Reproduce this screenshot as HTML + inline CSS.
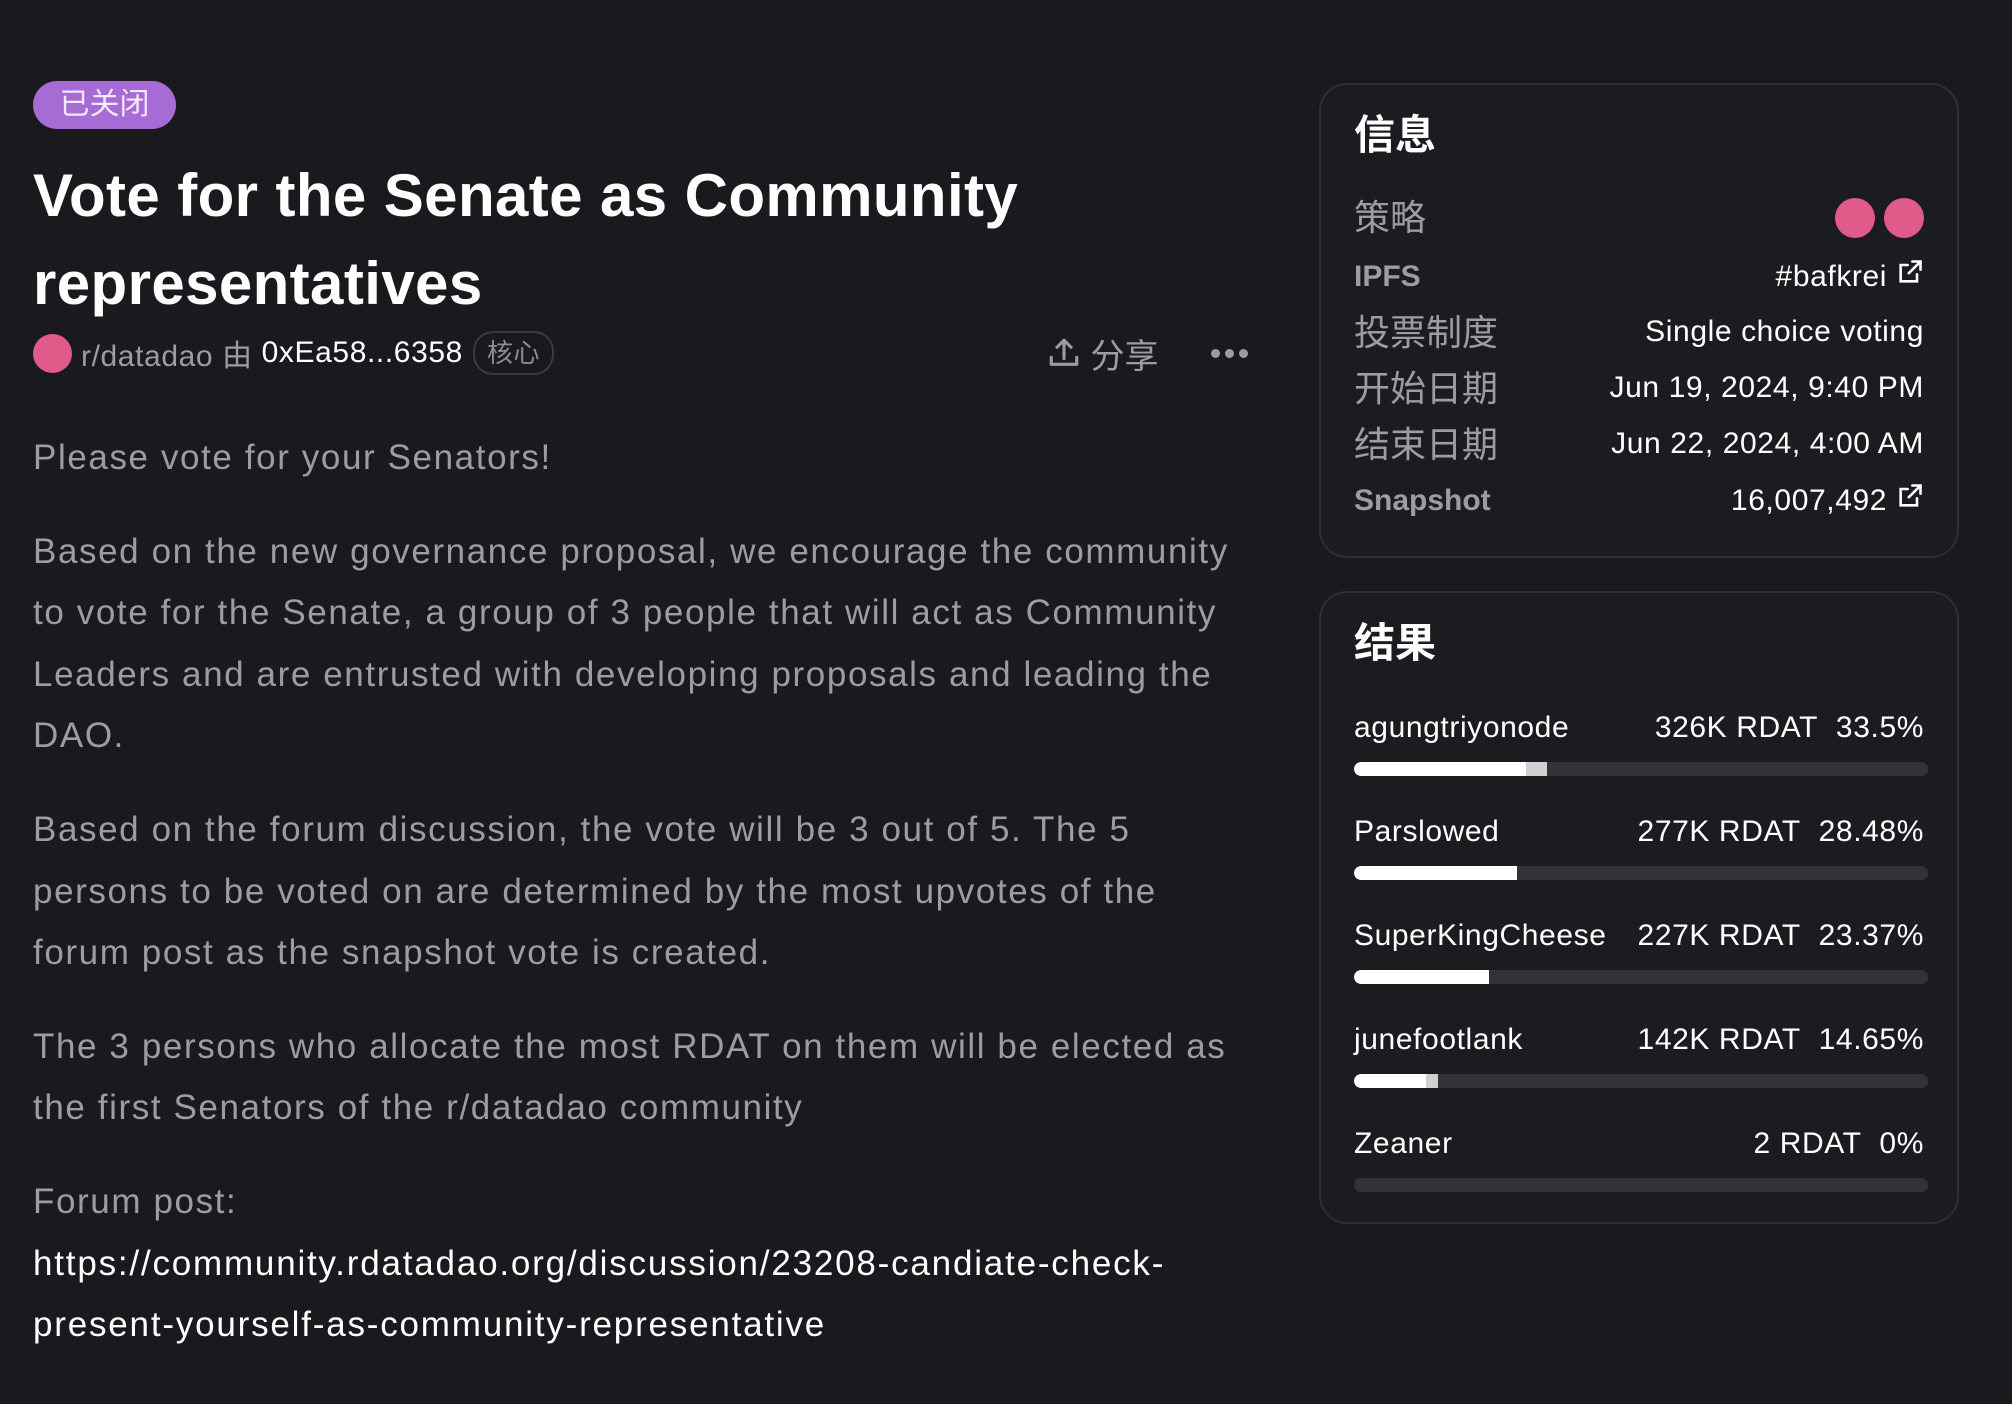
<!DOCTYPE html>
<html><head><meta charset="utf-8"><style>
*{margin:0;padding:0;box-sizing:border-box}
html,body{width:2012px;height:1404px;background:#1a1a1e;overflow:hidden}
body{font-family:"Liberation Sans","Noto Sans CJK SC",sans-serif;color:#fff;position:relative}
.abs{position:absolute;white-space:nowrap}
.badge{left:33px;top:81px;width:143px;height:48px;border-radius:24px;background:#a76bd6;color:#f3e6ff;font-size:30px;line-height:48px;text-align:center}
.title{left:33px;top:152px;font-size:60px;font-weight:bold;line-height:88px;white-space:normal;width:1150px;letter-spacing:0.4px}
.meta{left:33px;top:333px;height:40px;display:flex;align-items:center;font-size:30px;color:#9c9ca3;letter-spacing:0.6px}
.av{width:39px;height:39px;border-radius:50%;background:#e05a8a;margin-right:9px}
.core{border:2px solid #3a3a40;border-radius:20px;padding:0 12px;height:44px;line-height:40px;margin-left:10px;font-size:26px;color:#8c8c93}
.body{left:33px;top:427px;width:1215px;font-size:35px;line-height:61.6px;color:#9c9ca3;white-space:normal;letter-spacing:1.6px}
.body p{margin-bottom:32px}
.body a{color:#fff;text-decoration:none;display:block;letter-spacing:1.8px}
.card{position:absolute;left:1319px;width:640px;border:2px solid #2e2e33;border-radius:28px;background:#1c1c20}
.ct{position:absolute;left:33px;font-size:41px;font-weight:bold}
.lab{position:absolute;left:33px;color:#9c9ca3;font-size:36px}
.lab.s{font-size:30px;font-weight:bold}
.val{position:absolute;right:33px;font-size:30px;color:#fff;white-space:nowrap;letter-spacing:0.6px}
.nm{position:absolute;left:33px;font-size:30px;letter-spacing:0.6px}
.bar{position:absolute;left:33px;width:574px;height:14px;border-radius:7px;background:#333336;overflow:hidden}
.bar i{position:absolute;left:0;top:0;bottom:0;background:#fff;border-radius:7px 0 0 7px}
.bar b{position:absolute;top:0;bottom:0;background:#d0d0d0}
</style></head><body>
<div class="abs badge">已关闭</div>
<div class="abs title">Vote for the Senate as Community representatives</div>
<div class="abs meta"><div class="av"></div>r/datadao&nbsp;由&nbsp;<span style="color:#fff">0xEa58...6358</span><span class="core">核心</span></div>
<div class="abs" style="left:1047px;top:333px;height:40px;display:flex;align-items:center;font-size:34px;color:#9c9ca3">
<svg width="34" height="34" viewBox="0 0 24 24" fill="none" stroke="#9c9ca3" stroke-width="2.2" stroke-linecap="round" stroke-linejoin="round"><path d="M12 16V3M7 8l5-5 5 5M3 15v5h18v-5"/></svg>&nbsp;分享</div>
<div class="abs" style="left:1211px;top:349px;display:flex;gap:5px"><span style="width:9px;height:9px;border-radius:50%;background:#9c9ca3"></span><span style="width:9px;height:9px;border-radius:50%;background:#9c9ca3"></span><span style="width:9px;height:9px;border-radius:50%;background:#9c9ca3"></span></div>
<div class="abs body">
<p>Please vote for your Senators!</p>
<p>Based on the new governance proposal, we encourage the community to vote for the Senate, a group of 3 people that will act as Community Leaders and are entrusted with developing proposals and leading the DAO.</p>
<p>Based on the forum discussion, the vote will be 3 out of 5. The 5 persons to be voted on are determined by the most upvotes of the forum post as the snapshot vote is created.</p>
<p>The 3 persons who allocate the most RDAT on them will be elected as the first Senators of the r/datadao community</p>
<p>Forum post: <a>https://community.rdatadao.org/discussion/23208-candiate-check-present-yourself-as-community-representative</a></p>
</div>

<div class="card" style="top:83px;height:475px">
<div class="ct" style="top:16px">信息</div>
<div class="lab" style="top:104px">策略</div>
<div class="abs" style="right:33px;top:113px;display:flex;gap:9px"><span style="width:40px;height:40px;border-radius:50%;background:#e05a8a"></span><span style="width:40px;height:40px;border-radius:50%;background:#e05a8a"></span></div>
<div class="lab s" style="top:175px">IPFS</div>
<div class="val" style="top:173px">#bafkrei <svg width="28" height="28" viewBox="0 0 24 24" fill="none" stroke="#fff" stroke-width="2.2" stroke-linecap="round"><path d="M14 3h7v7M21 3l-10 10M18 14v6H4V6h6"/></svg></div>
<div class="lab" style="top:219px">投票制度</div>
<div class="val" style="top:230px">Single choice voting</div>
<div class="lab" style="top:275px">开始日期</div>
<div class="val" style="top:286px">Jun 19, 2024, 9:40 PM</div>
<div class="lab" style="top:331px">结束日期</div>
<div class="val" style="top:342px">Jun 22, 2024, 4:00 AM</div>
<div class="lab s" style="top:399px">Snapshot</div>
<div class="val" style="top:397px">16,007,492 <svg width="28" height="28" viewBox="0 0 24 24" fill="none" stroke="#fff" stroke-width="2.2" stroke-linecap="round"><path d="M14 3h7v7M21 3l-10 10M18 14v6H4V6h6"/></svg></div>
</div>

<div class="card" style="top:591px;height:633px">
<div class="ct" style="top:16px">结果</div>
<div class="nm" style="top:118px">agungtriyonode</div><div class="val" style="top:118px">326K RDAT&nbsp;&nbsp;33.5%</div>
<div class="bar" style="top:169px"><i style="width:172px"></i><b style="left:172px;width:21px"></b></div>
<div class="nm" style="top:222px">Parslowed</div><div class="val" style="top:222px">277K RDAT&nbsp;&nbsp;28.48%</div>
<div class="bar" style="top:273px"><i style="width:163px"></i></div>
<div class="nm" style="top:326px">SuperKingCheese</div><div class="val" style="top:326px">227K RDAT&nbsp;&nbsp;23.37%</div>
<div class="bar" style="top:377px"><i style="width:135px"></i></div>
<div class="nm" style="top:430px">junefootlank</div><div class="val" style="top:430px">142K RDAT&nbsp;&nbsp;14.65%</div>
<div class="bar" style="top:481px"><i style="width:72px"></i><b style="left:72px;width:12px"></b></div>
<div class="nm" style="top:534px">Zeaner</div><div class="val" style="top:534px">2 RDAT&nbsp;&nbsp;0%</div>
<div class="bar" style="top:585px"></div>
</div>
</body></html>
